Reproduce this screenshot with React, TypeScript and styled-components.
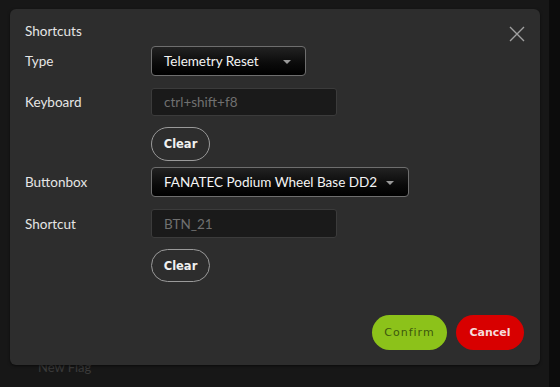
import React from "react";
import styled, { createGlobalStyle } from "styled-components";

const Global = createGlobalStyle`
  html, body { margin: 0; padding: 0; background: #161616; }
  body { font-family: Lato, "Liberation Sans", sans-serif; }
  * { box-sizing: border-box; }
`;

const Page = styled.div`
  position: relative;
  width: 560px;
  height: 387px;
  overflow: hidden;
  display: flex;
`;

const Backdrop = styled.div`
  flex: 1;
  background: #171717;
  display: flex;
  flex-direction: column;
  justify-content: flex-end;
  padding: 0 0 12px 38px;
`;

const BackText = styled.div`
  font-size: 13px;
  color: #3a3a3a;
`;

const RightStrip = styled.div`
  width: 11px;
  background: #0c0c0c;
`;

const Modal = styled.div`
  position: absolute;
  left: 10px;
  top: 9px;
  width: 530px;
  height: 356px;
  background: #2d2d2d;
  border-radius: 6px;
  box-shadow: 0 1px 3px rgba(0, 0, 0, 0.6);
  padding: 14px 16px 15px 15px;
  display: flex;
  flex-direction: column;
`;

const Title = styled.div`
  font-size: 13.5px;
  line-height: 16px;
  color: #e6e6e6;
  margin-bottom: 7px;
`;

const CloseButton = styled.button`
  position: absolute;
  left: 498px;
  top: 16px;
  width: 18px;
  height: 18px;
  padding: 0;
  border: none;
  background: transparent;
  display: flex;
  align-items: center;
  justify-content: center;
`;

const Form = styled.div`
  display: grid;
  grid-template-columns: 126px auto;
  justify-items: start;
  align-items: center;
`;

const Label = styled.div<{ $mt?: number }>`
  font-size: 13.5px;
  color: #e6e6e6;
  margin-top: ${(p) => p.$mt ?? 0}px;
`;

const Cell = styled.div<{ $mt?: number }>`
  margin-top: ${(p) => p.$mt ?? 0}px;
`;

const Select = styled.div<{ $w: number; $h: number }>`
  width: ${(p) => p.$w}px;
  height: ${(p) => p.$h}px;
  border: 1px solid #6e6e6e;
  border-radius: 4px;
  background: linear-gradient(#222 0%, #0a0a0a 60%, #000 100%);
  display: flex;
  align-items: center;
  justify-content: space-between;
  padding: 0 14px 0 12px;
  font-size: 13.5px;
  color: #f4f4f4;
`;

const Arrow = styled.span`
  width: 0;
  height: 0;
  border-left: 4px solid transparent;
  border-right: 4px solid transparent;
  border-top: 4px solid #9a9a9a;
  margin-top: 1px;
`;

const Input = styled.div<{ $h: number }>`
  width: 186px;
  height: ${(p) => p.$h}px;
  background: #1a1a1a;
  border: 1px solid #3b3b3b;
  border-radius: 3px;
  display: flex;
  align-items: center;
  padding-left: 12px;
  font-size: 13.5px;
  color: #707070;
`;

const ClearButton = styled.button<{ $h: number }>`
  width: 59px;
  height: ${(p) => p.$h}px;
  border-radius: 17px;
  border: 1px solid #9a9a9a;
  background: transparent;
  color: #f0f0f0;
  font-family: "DejaVu Sans", Verdana, sans-serif;
  font-weight: bold;
  font-size: 11.5px;
  padding: 0;
`;

const Spacer = styled.div`
  flex: 1;
`;

const Footer = styled.div`
  display: flex;
  justify-content: flex-end;
  gap: 9px;
`;

const PillButton = styled.button<{ $bg: string; $fg: string; $w: number; $bold?: boolean }>`
  width: ${(p) => p.$w}px;
  height: 35px;
  border-radius: 18px;
  border: none;
  background: ${(p) => p.$bg};
  color: ${(p) => p.$fg};
  font-family: "DejaVu Sans", Verdana, sans-serif;
  font-size: 11px;
  font-weight: ${(p) => (p.$bold ? "bold" : "normal")};
  letter-spacing: ${(p) => (p.$bold ? "0" : "1px")};
  padding: 0;
`;

export default function App() {
  return (
    <>
      <Global />
      <Page>
        <Backdrop>
          <BackText>New Flag</BackText>
        </Backdrop>
        <RightStrip />
        <Modal>
          <CloseButton aria-label="Close">
            <svg width="16" height="16" viewBox="0 0 16 16">
              <path d="M1 1 L15 15 M15 1 L1 15" stroke="#a0a0a0" strokeWidth="1.4" fill="none" />
            </svg>
          </CloseButton>
          <Title>Shortcuts</Title>
          <Form>
            <Label>Type</Label>
            <Cell>
              <Select $w={155} $h={30}>
                <span>Telemetry Reset</span>
                <Arrow />
              </Select>
            </Cell>
            <Label $mt={12}>Keyboard</Label>
            <Cell $mt={12}>
              <Input $h={28}>ctrl+shift+f8</Input>
            </Cell>
            <span />
            <Cell $mt={11}>
              <ClearButton $h={34}>Clear</ClearButton>
            </Cell>
            <Label $mt={6}>Buttonbox</Label>
            <Cell $mt={6}>
              <Select $w={258} $h={30}>
                <span>FANATEC Podium Wheel Base DD2</span>
                <Arrow />
              </Select>
            </Cell>
            <Label $mt={12}>Shortcut</Label>
            <Cell $mt={12}>
              <Input $h={29}>BTN_21</Input>
            </Cell>
            <span />
            <Cell $mt={11}>
              <ClearButton $h={33}>Clear</ClearButton>
            </Cell>
          </Form>
          <Spacer />
          <Footer>
            <PillButton $bg="#8cc21a" $fg="#3d580d" $w={75}>Confirm</PillButton>
            <PillButton $bg="#d80000" $fg="#f6dcdc" $w={68} $bold>Cancel</PillButton>
          </Footer>
        </Modal>
      </Page>
    </>
  );
}
